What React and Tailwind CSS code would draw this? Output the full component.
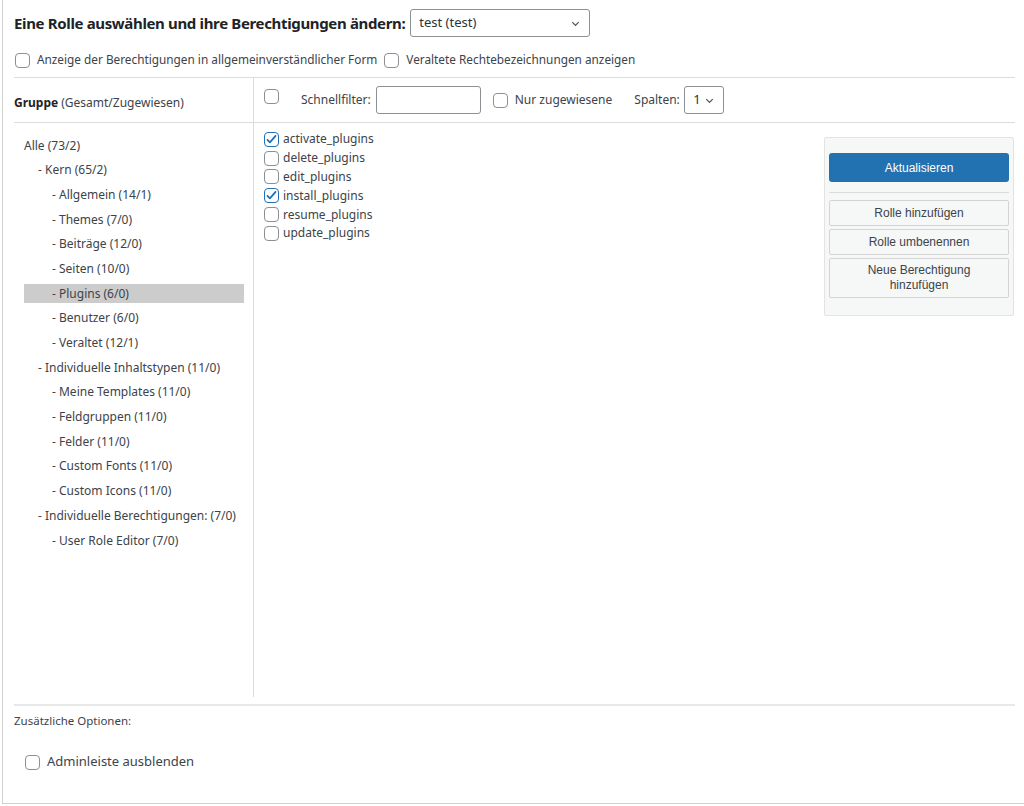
import React from "react";

const groups = [
  { label: "Alle (73/2)", level: 0 },
  { label: "- Kern (65/2)", level: 1 },
  { label: "- Allgemein (14/1)", level: 2 },
  { label: "- Themes (7/0)", level: 2 },
  { label: "- Beiträge (12/0)", level: 2 },
  { label: "- Seiten (10/0)", level: 2 },
  { label: "- Plugins (6/0)", level: 2, active: true },
  { label: "- Benutzer (6/0)", level: 2 },
  { label: "- Veraltet (12/1)", level: 2 },
  { label: "- Individuelle Inhaltstypen (11/0)", level: 1 },
  { label: "- Meine Templates (11/0)", level: 2 },
  { label: "- Feldgruppen (11/0)", level: 2 },
  { label: "- Felder (11/0)", level: 2 },
  { label: "- Custom Fonts (11/0)", level: 2 },
  { label: "- Custom Icons (11/0)", level: 2 },
  { label: "- Individuelle Berechtigungen: (7/0)", level: 1 },
  { label: "- User Role Editor (7/0)", level: 2 },
];

const caps = [
  { name: "activate_plugins", checked: true },
  { name: "delete_plugins" },
  { name: "edit_plugins" },
  { name: "install_plugins", checked: true },
  { name: "resume_plugins" },
  { name: "update_plugins" },
];

const indent = ["pl-0", "pl-[14px]", "pl-[28px]"];

function Box({ checked, className = "" }) {
  return (
    <span
      className={`inline-flex shrink-0 items-center justify-center w-[15px] h-[15px] rounded-[4px] border bg-white ${
        checked ? "border-[#2271b1]" : "border-[#8c8f94]"
      } ${className}`}
    >
      {checked && (
        <svg viewBox="0 0 16 16" className="w-[13px] h-[13px]">
          <path d="M3 8.5l3 3 7-8" fill="none" stroke="#2271b1" strokeWidth="2.2" strokeLinecap="round" strokeLinejoin="round" />
        </svg>
      )}
    </span>
  );
}

function Chevron() {
  return (
    <svg viewBox="0 0 12 12" className="w-[11px] h-[11px]">
      <path d="M2.5 4.5l3.5 3.5 3.5-3.5" fill="none" stroke="#50575e" strokeWidth="1.4" />
    </svg>
  );
}

export default function App() {
  return (
    <div
      className="w-[1024px] h-[806px] bg-white text-[#3c434a] overflow-hidden"
      style={{ fontFamily: '"Noto Sans", "Open Sans", sans-serif' }}
    >
      <div className="ml-[2px] mr-[-4px] h-[804px] border-l border-b border-[#d0d0d0] flex flex-col">
        {/* Title */}
        <div className="flex items-center pl-[11px] pt-[9px] h-[37px]">
          <h2 className="text-[15px] font-bold text-[#1d2327] tracking-[-0.35px]">
            Eine Rolle auswählen und ihre Berechtigungen ändern:
          </h2>
          <div className="ml-[5px] w-[180px] h-[28px] border border-[#8c8f94] rounded-[3px] flex items-center justify-between px-[8px] text-[13px] text-[#2c3338]">
            <span>test (test)</span>
            <Chevron />
          </div>
        </div>

        {/* Options */}
        <div className="flex items-center gap-[7px] pl-[12px] h-[32px] mt-[7px] text-[11.8px]">
          <Box />
          <span>Anzeige der Berechtigungen in allgemeinverständlicher Form</span>
          <Box />
          <span>Veraltete Rechtebezeichnungen anzeigen</span>
        </div>

        {/* Main table */}
        <div className="ml-[11px] mt-[1px] w-[1001px] border-t border-[#dcdcde]">
          <div className="flex border-b border-[#dcdcde] h-[45px]">
            <div className="w-[240px] border-r border-[#dcdcde] flex items-center pt-[5px] text-[12px]">
              <span className="font-bold text-[#1d2327]">Gruppe</span>
              <span className="ml-[3px]">(Gesamt/Zugewiesen)</span>
            </div>
            <div className="flex-1 flex items-center pl-[10px] text-[12px]">
              <Box className="-mt-[8px]" />
              <span className="ml-[22px]">Schnellfilter:</span>
              <div className="ml-[5px] w-[105px] h-[28px] border border-[#8c8f94] rounded-[3px]" />
              <Box className="ml-[12px]" />
              <span className="ml-[7px]">Nur zugewiesene</span>
              <span className="ml-[22px]">Spalten:</span>
              <div className="ml-[4px] w-[40px] h-[28px] border border-[#8c8f94] rounded-[3px] flex items-center justify-center gap-[3px] text-[13px] text-[#2c3338]">
                <span>1</span>
                <Chevron />
              </div>
            </div>
          </div>

          <div className="flex h-[574px]">
            {/* Groups */}
            <div className="w-[240px] border-r border-[#dcdcde] pt-[13px] pl-[10px] pr-[9px] text-[12px]">
              {groups.map((g) => (
                <div
                  key={g.label}
                  className={`h-[19px] mb-[5.7px] flex items-center ${indent[g.level]} ${
                    g.active ? "bg-[#cccccc]" : ""
                  }`}
                >
                  {g.label}
                </div>
              ))}
            </div>

            {/* Capabilities */}
            <div className="flex-1 flex justify-between pt-[7px] pl-[10px]">
              <div className="text-[12px]">
                {caps.map((c) => (
                  <div key={c.name} className="h-[18.8px] flex items-center gap-[4px]">
                    <Box checked={c.checked} />
                    <span>{c.name}</span>
                  </div>
                ))}
              </div>

              <div className="mt-[7px] mr-[1px] w-[190px] h-[179px] bg-[#f6f7f7] border border-[#e3e3e3] rounded-[2px] px-[4px] pt-[15px]" style={{ fontFamily: '"Liberation Sans", Arial, sans-serif' }}>
                <div className="h-[29px] bg-[#2271b1] rounded-[3px] flex items-center justify-center text-white text-[12px]">
                  Aktualisieren
                </div>
                <div className="border-t border-[#dcdcde] mt-[10px] mb-[7px]" />
                <div className="flex flex-col gap-[3px] text-[12px] text-[#3c434a]">
                  <div className="h-[26px] bg-[#f6f7f7] border border-[#d4d4d4] rounded-[2px] flex items-center justify-center">
                    Rolle hinzufügen
                  </div>
                  <div className="h-[26px] bg-[#f6f7f7] border border-[#d4d4d4] rounded-[2px] flex items-center justify-center">
                    Rolle umbenennen
                  </div>
                  <div className="h-[40px] bg-[#f6f7f7] border border-[#d4d4d4] rounded-[2px] flex items-center justify-center text-center leading-[15px]">
                    Neue Berechtigung
                    <br />
                    hinzufügen
                  </div>
                </div>
              </div>
            </div>
          </div>

          <div className="border-t-2 border-[#e8e8e8] mt-[7px]">
            <div className="pt-[6px] text-[11.5px] text-[#3c434a]">Zusätzliche Optionen:</div>
            <div className="flex items-center gap-[7px] mt-[23px] pl-[11px] text-[13px]">
              <Box />
              <span>Adminleiste ausblenden</span>
            </div>
          </div>
        </div>
      </div>
    </div>
  );
}
